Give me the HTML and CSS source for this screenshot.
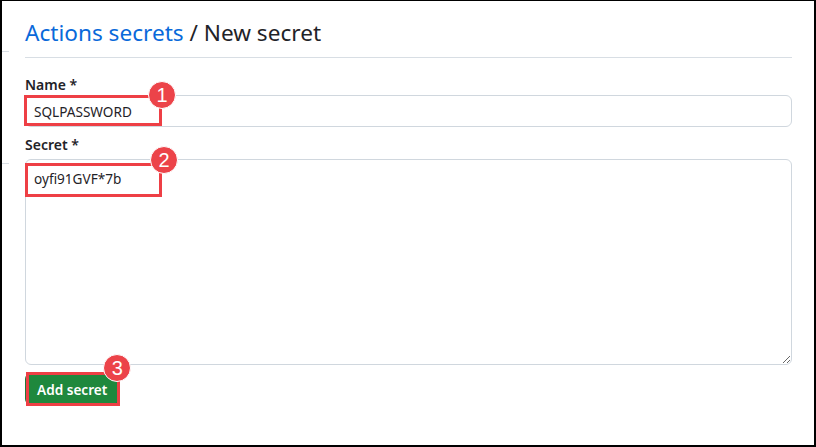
FILE: index.html
```html
<!DOCTYPE html>
<html>
<head>
<meta charset="utf-8">
<link rel="stylesheet" href="styles.css">
</head>
<body>
<div class="frame">
  <div class="subhead">
    <h2 class="subhead-title"><a class="crumb" href="#">Actions secrets</a> / New secret</h2>
  </div>
  <form class="form">
    <div class="form-group">
      <label class="form-label">Name *</label>
      <div class="field">
        <input class="form-control" type="text" value="SQLPASSWORD">
        <span class="mark mark-name"></span>
        <span class="badge badge-1">1</span>
      </div>
    </div>
    <div class="form-group">
      <label class="form-label">Secret *</label>
      <div class="field">
        <textarea class="form-control textarea">oyfi91GVF*7b</textarea>
        <span class="mark mark-secret"></span>
        <span class="badge badge-2">2</span>
      </div>
    </div>
    <div class="field actions">
      <button class="btn-primary" type="button">Add secret</button>
      <span class="mark mark-btn"></span>
      <span class="badge badge-3">3</span>
    </div>
  </form>
</div>
</body>
</html>
```
FILE: styles.css
```css
* { box-sizing: border-box; }
html, body { margin: 0; padding: 0; background: #fff; }
body { font-family: "Noto Sans", "Liberation Sans", sans-serif; color: #1f2328; }

.frame {
  width: 816px;
  height: 447px;
  border: 2px solid #000;
  border-top-width: 1px;
  padding: 16px 22px 0 23px;
  background:
    linear-gradient(#d8dee4, #d8dee4) 0 50px / 7px 1px no-repeat,
    linear-gradient(#d8dee4, #d8dee4) 0 162px / 7px 1px no-repeat,
    #fff;
}

.subhead {
  padding-bottom: 8px;
  border-bottom: 1px solid #d8dee4;
}
.subhead-title {
  margin: 0;
  font-size: 22.6px;
  line-height: 32px;
  font-weight: 400;
  color: #1f2328;
}
.crumb { color: #0969da; text-decoration: none; }

.form { margin-top: 17px; }
.form-group { margin-bottom: 8px; }
.form-label {
  display: block;
  font-size: 14px;
  font-weight: 600;
  line-height: 20px;
}
.form-group + .form-group .form-label { margin-bottom: 4px; }

.field { position: relative; }

.form-control {
  display: block;
  width: 100%;
  height: 32px;
  padding: 5px 8px;
  font-family: "Noto Sans", "Liberation Sans", sans-serif;
  font-size: 13.6px;
  line-height: 20px;
  color: #1f2328;
  background: #fff;
  border: 1px solid #d0d7de;
  border-radius: 6px;
  outline: none;
}
.textarea {
  height: 206px;
  padding-top: 9px;
  resize: vertical;
}

.actions { display: inline-block; }
.btn-primary {
  display: block;
  height: 32px;
  padding: 0 11px;
  font-family: "Noto Sans", "Liberation Sans", sans-serif;
  font-size: 13.6px;
  font-weight: 600;
  color: #fff;
  background: #1f883d;
  border: 1px solid rgba(31, 35, 40, 0.15);
  border-radius: 6px;
}

.mark {
  position: absolute;
  border: 3px solid #ee3f45;
  pointer-events: none;
}
.mark-name { left: -1px; top: 0; width: 138px; height: 31px; }
.mark-secret { left: 0; top: 4px; width: 137px; height: 34px; }
.mark-btn { left: 1px; right: -1px; top: -1px; bottom: -1px; }

.badge {
  position: absolute;
  width: 28px;
  height: 28px;
  border-radius: 50%;
  background: #ec4349;
  border: 1px solid #fff;
  color: #fff;
  font-family: "Liberation Sans", sans-serif;
  font-size: 20px;
  line-height: 26px;
  text-align: center;
}
.badge-1 { left: 123px; top: -14px; }
.badge-2 { left: 125px; top: -13px; }
.badge-3 { right: -12px; top: -19px; }
```
